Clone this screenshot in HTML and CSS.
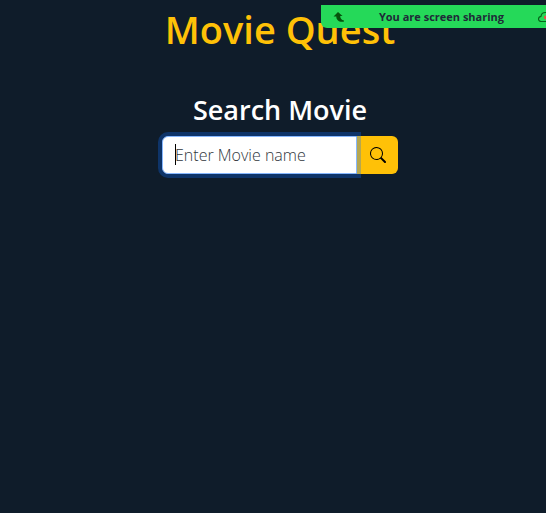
FILE: index.html
```html
<!DOCTYPE html>
<html lang="en">
<head>
<meta charset="utf-8">
<title>Movie Quest</title>
<link rel="stylesheet" href="styles.css">
</head>
<body>
<aside class="share-bar">
  <svg class="share-arrow" viewBox="0 0 12 12" aria-hidden="true"><path d="M5 1 9.500 5H7.200C7.400 7.500 8.500 9 11 9.500v1C6.500 11.500 3.300 9.500 3.300 5.500H.5z" fill="#06520c"/></svg>
  <span class="share-text">You are screen sharing</span>
  <svg class="share-cloud" viewBox="0 0 18 12" aria-hidden="true"><path d="M3.500 10.500C1.500 10.500.5 9.500.5 8 .5 6.500 1.500 5.500 3 5.300 3.300 2.800 5 1.500 7.500 1.500c2.500 0 4 1.500 4.500 3.500 3 0 4 1.500 4 3s-1 2.500-3 2.500z" fill="none" stroke="#06661a" stroke-width="1.200"/><circle cx="8" cy="6.500" r="2" fill="#ee4b4b"/></svg>
</aside>
<main class="page">
  <h1 class="title">Movie Quest</h1>
  <form class="search">
    <h2 class="search-title"><label for="movie">Search Movie</label></h2>
    <div class="input-group">
      <div class="field">
        <input class="input" id="movie" type="text" placeholder="Enter Movie name">
        <span class="caret"></span>
      </div>
      <button class="button" type="button" aria-label="Search">
        <svg class="icon" viewBox="0 0 16 16" fill="currentColor" aria-hidden="true"><path d="M11.742 10.344a6.500 6.500 0 1 0-1.397 1.398h-.001c.03.04.062.078.098.115l3.850 3.850a1 1 0 0 0 1.415-1.414l-3.850-3.850a1.007 1.007 0 0 0-.115-.1zM12 6.500a5.500 5.500 0 1 1-11 0 5.500 5.500 0 0 1 11 0z"/></svg>
      </button>
    </div>
  </form>
</main>
</body>
</html>
```
FILE: styles.css
```css
* {
  box-sizing: border-box;
}

body {
  margin: 0;
  min-height: 100vh;
  overflow-x: hidden;
  background: #0f1c2a;
  color: #fff;
  font-family: "Open Sans", "Noto Sans", sans-serif;
}

.page {
  display: flex;
  flex-direction: column;
  align-items: center;
  gap: 36px;
  padding: 5px 0 0 14px;
}

.title {
  margin: 0;
  color: #ffc107;
  font-size: 38px;
  font-weight: 600;
  line-height: 48px;
}

.search {
  display: flex;
  flex-direction: column;
  align-items: center;
  gap: 6px;
}

.search-title {
  margin: 0;
  font-size: 27px;
  font-weight: 600;
  line-height: 41px;
}

.input-group {
  display: flex;
}

.field {
  position: relative;
  z-index: 1;
}

.input {
  display: block;
  width: 195px;
  height: 38px;
  padding: 6px 12px;
  border: 1px solid #86b7fe;
  border-radius: 6px 0 0 6px;
  outline: 0;
  background: #fff;
  box-shadow: 0 0 0 4px rgba(13, 110, 253, 0.3);
  color: #212529;
  font: 300 16px/24px "Open Sans", "Noto Sans", sans-serif;
}

.input::placeholder {
  color: #30363c;
  opacity: 1;
}

.caret {
  position: absolute;
  top: 8px;
  left: 13px;
  width: 1px;
  height: 21px;
  background: #000;
}

.button {
  display: flex;
  align-items: center;
  justify-content: center;
  width: 41px;
  padding: 0;
  border: 0;
  border-radius: 0 6px 6px 0;
  background: #ffc107;
  color: #000;
}

.icon {
  width: 16px;
  height: 16px;
}

.share-bar {
  position: absolute;
  top: 5px;
  right: 0;
  z-index: 2;
  display: flex;
  align-items: center;
  justify-content: space-between;
  width: 225px;
  height: 23px;
  padding-left: 12px;
  overflow: hidden;
  border-radius: 0 0 0 6px;
  background: #25d959;
  color: #1f2a38;
}

.share-arrow {
  width: 12px;
  height: 12px;
}

.share-text {
  font-size: 11px;
  font-weight: 700;
  line-height: 23px;
}

.share-cloud {
  width: 18px;
  height: 12px;
  margin-right: -10px;
}
```
